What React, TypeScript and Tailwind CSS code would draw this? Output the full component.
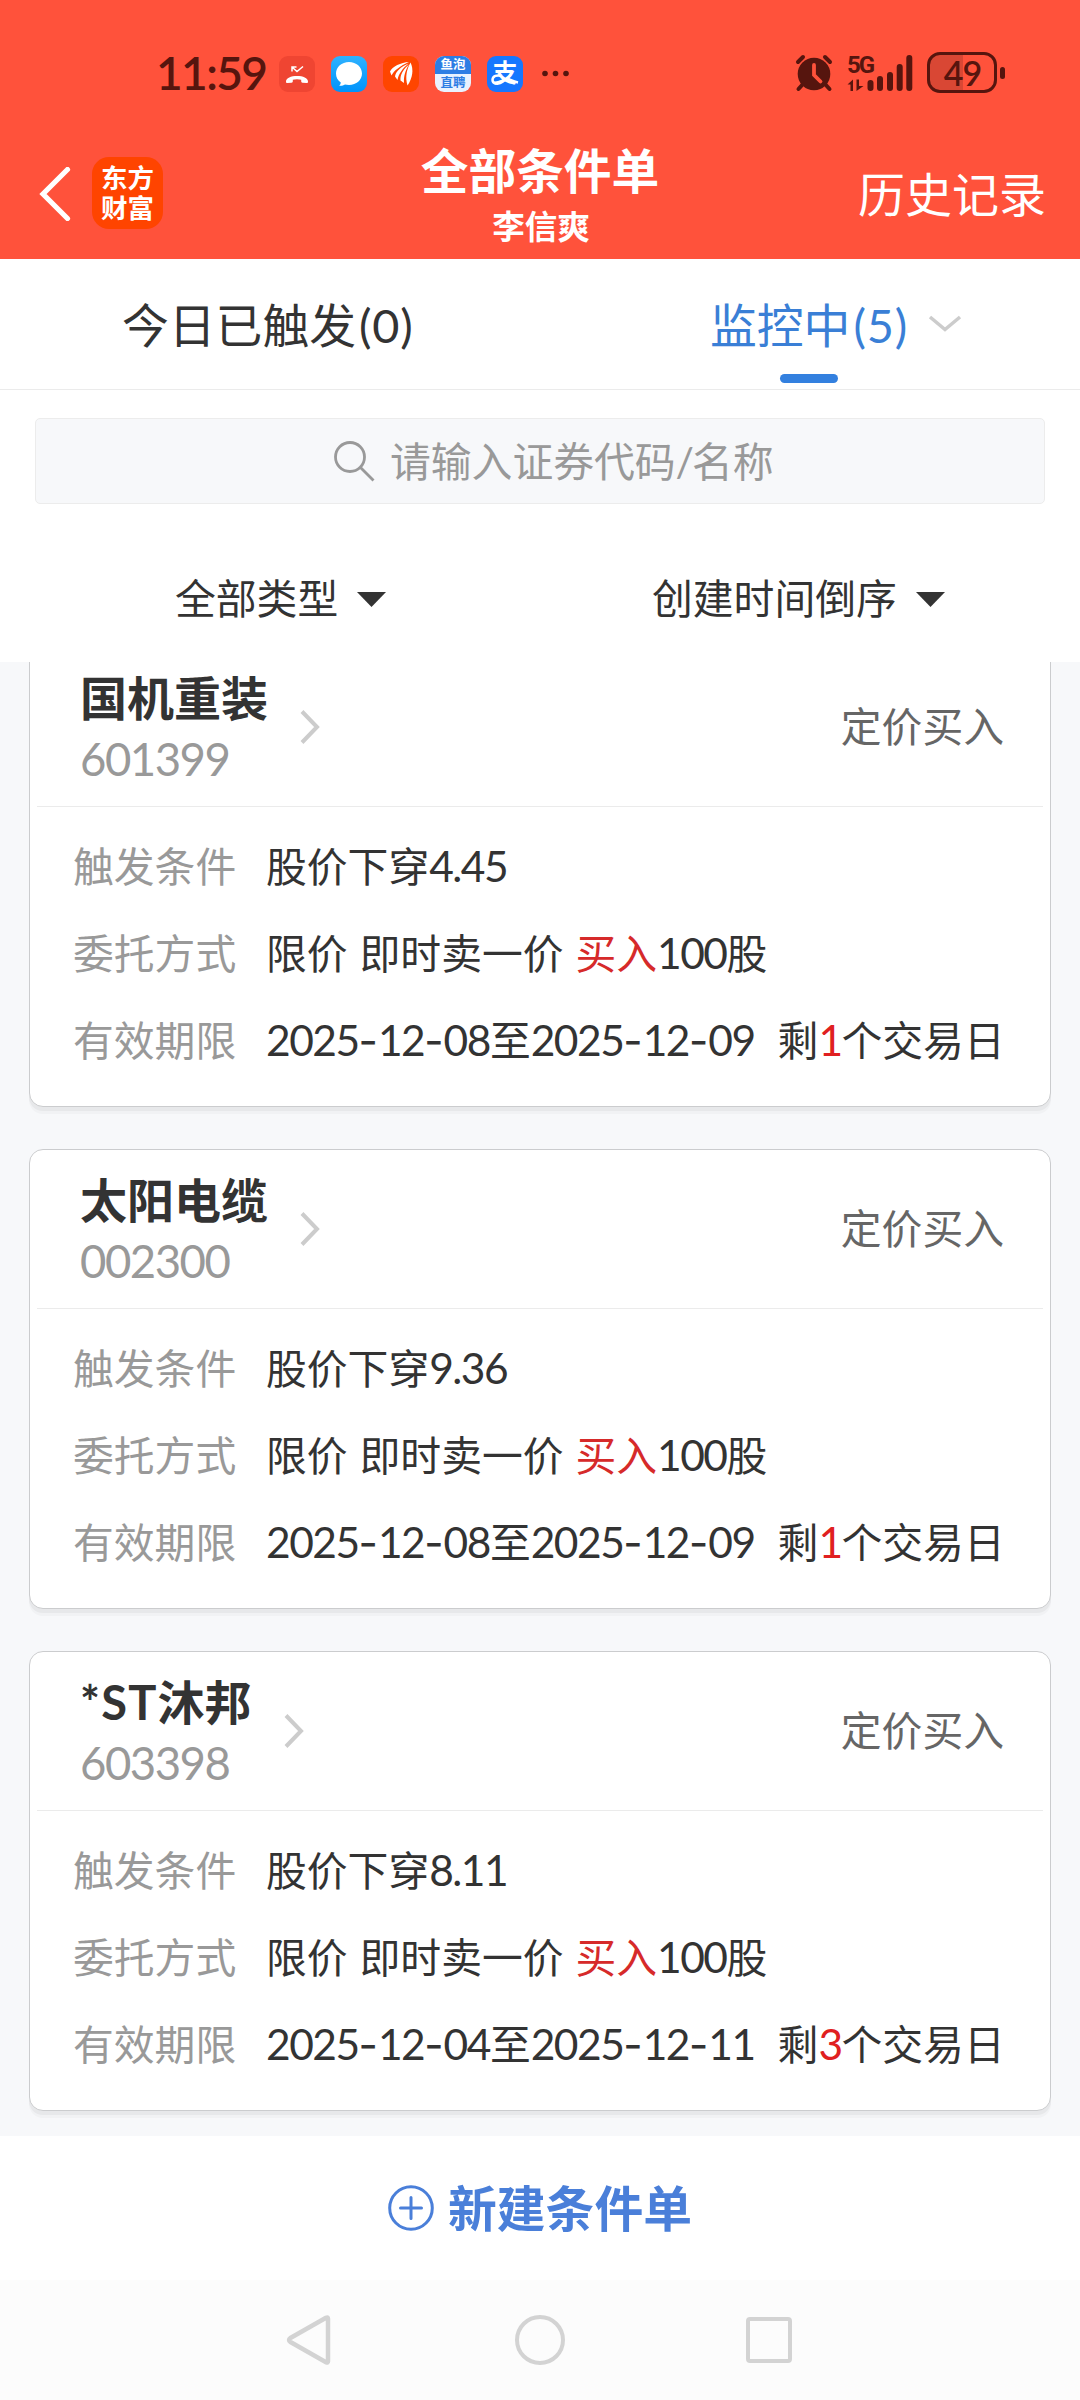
import type { ReactNode } from 'react';

type Order = {
  name: ReactNode;
  code: string;
  price: string;
  from: string;
  to: string;
  days: string;
};

const orders: Order[] = [
  { name: '国机重装', code: '601399', price: '4.45', from: '2025-12-08', to: '2025-12-09', days: '1' },
  { name: '太阳电缆', code: '002300', price: '9.36', from: '2025-12-08', to: '2025-12-09', days: '1' },
  {
    name: (
      <>
        <span className="tracking-[1.2px]">*ST</span>沐邦
      </>
    ),
    code: '603398',
    price: '8.11',
    from: '2025-12-04',
    to: '2025-12-11',
    days: '3',
  },
];

function Num({ children }: { children: ReactNode }) {
  return <span className="text-[42.5px] leading-none tracking-[-1.5px]">{children}</span>;
}

function DateText({ value }: { value: string }) {
  const parts = value.split('-');
  return (
    <Num>
      {parts.map((part, i) => (
        <span key={i}>
          {i > 0 && <span className="font-['Inter'] text-[42px] leading-none tracking-[0px]">-</span>}
          {part}
        </span>
      ))}
    </Num>
  );
}

function StatusBar() {
  return (
    <div className="flex h-[112px] items-start pl-[156px] text-[#56150e]">
      <div className="mt-[48px] w-[123px] whitespace-nowrap text-[46px] font-semibold leading-[50px] tracking-[-1.6px]">
        11:59
      </div>
      <div className="mt-[56px] flex gap-4">
        <svg width="36" height="36" viewBox="0 0 36 36">
          <rect width="36" height="36" rx="9" fill="#ef4532" />
          <path d="M13 15.500V11h4.500M13.500 11.500l4.500 4 6-5" fill="none" stroke="#fff" strokeWidth="1.500" />
          <path
            d="M7 25.500c0-3.500 5-5.500 11-5.500s11 2 11 5.500c0 1.300-.5 1.700-1.500 1.600l-4-.4c-1-.1-1.300-.6-1.300-1.500v-1.400c-2.500-.8-5.900-.8-8.400 0v1.400c0 .9-.3 1.400-1.300 1.500l-4 .4c-1 .1-1.500-.3-1.500-1.600z"
            fill="#fff"
          />
        </svg>
        <svg width="36" height="36" viewBox="0 0 36 36">
          <defs>
            <linearGradient id="chat" x1="0" y1="0" x2="0" y2="1">
              <stop offset="0" stopColor="#2fb2ff" />
              <stop offset="1" stopColor="#0093fb" />
            </linearGradient>
          </defs>
          <rect width="36" height="36" rx="9" fill="url(#chat)" />
          <path
            d="M18 6c7.300 0 13 5 13 11.500S25.300 29 18 29c-1.600 0-2.700-.2-4-.5-1.500 1-3.500 1.500-5.800 1.300 1-1 1.500-2.200 1.600-3.300C6.800 24.500 5 21.300 5 17.500 5 11 10.700 6 18 6z"
            fill="#fff"
          />
        </svg>
        <svg width="36" height="36" viewBox="0 0 36 36">
          <rect width="36" height="36" rx="9" fill="#ff4500" />
          <g fill="#fff">
            <path d="M26 6C18 6.500 9 10.500 7 15.500l1.500 4C11 14.500 17 10 26 6z" />
            <path d="M25.500 7.500C18.500 10.500 12.500 15.500 12 20.500l2.500 3.500C15.500 18 19.500 12.500 25.500 7.500z" />
            <path d="M26 8.500C20.500 13 17 18.500 17.500 24.500l3.500 2.500C20.500 20 22.500 14 26 8.500z" />
            <path d="M27.500 6.500C23.500 14 22 21 24.500 29.500 29.500 22 31 13.500 27.500 6.500z" />
          </g>
        </svg>
        <div className="flex h-9 w-9 flex-col overflow-hidden rounded-[9px] bg-[#e9f2ff] text-center text-[12.500px] font-bold leading-[17.500px]">
          <div className="h-[17.500px] bg-[#2d7de4] text-white">鱼泡</div>
          <div className="text-[#2d7de4]">直聘</div>
        </div>
        <div className="relative h-9 w-9 rounded-[9px] bg-[#1677ff] text-center text-[25px] font-bold leading-[33px] text-white">
          支
          <svg className="absolute left-0 top-0" width="36" height="36" viewBox="0 0 36 36">
            <path d="M15 20c-5-1.500-9.500 0-9.500 4s6 5 10.500 1.500M20 22.500c4 1.500 6 3 11 4" fill="none" stroke="#fff" strokeWidth="2.500" />
          </svg>
        </div>
      </div>
      <svg className="ml-[19px] mt-[70px]" width="27" height="7" viewBox="0 0 27 7" fill="currentColor">
        <circle cx="3" cy="3.500" r="2.800" />
        <circle cx="13.500" cy="3.500" r="2.800" />
        <circle cx="24" cy="3.500" r="2.800" />
      </svg>
      <svg className="ml-[225px] mt-[53px]" width="40" height="40" viewBox="0 0 40 40">
        <g stroke="currentColor" strokeWidth="4" strokeLinecap="round" fill="none">
          <path d="M4 9l5-5M36 9l-5-5M9 31l-4.500 5M31 31l4.500 5" />
        </g>
        <circle cx="20" cy="21" r="16.300" fill="currentColor" />
        <path d="M20 12v10l6.500 6.500" fill="none" stroke="#ff523b" strokeWidth="3.800" strokeLinecap="round" />
      </svg>
      <div className="ml-[13px] mt-[53px] flex h-[40px] w-[70px]">
        <div className="flex w-[20px] flex-col">
          <div className="whitespace-nowrap font-['Roboto'] text-[24px] font-bold leading-[24px] tracking-[-2px]">
            5G
          </div>
          <svg width="18" height="14" viewBox="0 0 18 14" fill="currentColor">
            <path d="M.5 7.500L6 2.500V14H3.500V7.500zM9.500 2.500V14l7-5H12V2.500z" />
          </svg>
        </div>
        <svg width="50" height="40" viewBox="20 0 50 40" fill="currentColor">
          <rect x="20.500" y="27" width="6" height="11" rx="3" />
          <rect x="30" y="23" width="6" height="15" rx="3" />
          <rect x="40" y="19" width="6" height="19" rx="3" />
          <rect x="49.700" y="11" width="6" height="27" rx="3" />
          <rect x="59.300" y="2" width="6" height="36" rx="3" />
        </svg>
      </div>
      <div className="ml-[10px] mt-[52px] flex items-center">
        <div className="flex h-[41px] w-[70px] items-center justify-center rounded-[13px] border-[3px] border-current bg-[linear-gradient(90deg,#d94734_52%,transparent_52%)] pl-px font-['Lato'] text-[34px] font-semibold leading-[35px] tracking-[-1px]">
          49
        </div>
        <div className="ml-[3px] h-[12px] w-[5px] rounded-full bg-current" />
      </div>
    </div>
  );
}

function Header() {
  return (
    <header className="grid h-[147px] grid-cols-[380px_1fr_380px] text-white">
      <div className="flex items-start pl-[39px]">
        <svg className="mt-[55px]" width="32" height="54" viewBox="0 0 32 54">
          <path d="M28.500 2.500L4 27l24.500 24.500" fill="none" stroke="#fff" strokeWidth="5.200" strokeLinecap="round" />
        </svg>
        <div className="ml-[21px] mt-[45px] h-[72px] w-[71px] rounded-[17px] bg-[#ff4400] pt-[7px] text-center text-[26.500px] font-bold leading-[29.500px]">
          东方
          <br />
          财富
        </div>
      </div>
      <div className="text-center">
        <h1 className="mt-[34px] text-[47.700px] font-bold leading-[50px]">全部条件单</h1>
        <div className="mt-[11px] pl-[2px] text-[32.600px] font-bold leading-[39px]">李信爽</div>
      </div>
      <div className="pr-[34px] pt-[57px] text-right text-[47px] leading-[50px]">历史记录</div>
    </header>
  );
}

function Caret() {
  return (
    <svg width="29" height="15" viewBox="0 0 29 15">
      <path d="M0 0h29L14.500 15z" fill="#333" />
    </svg>
  );
}

function OrderCard({ order }: { order: Order }) {
  return (
    <section className="h-[460px] shrink-0 rounded-[14px] border border-[#cbccce] bg-white px-[7px] shadow-[0_4px_0_#e7e8ea,0_7px_0_#f1f2f4]">
      <div className="flex h-[159px] items-start border-b border-[#ebebeb] pl-[43px] pr-[39px]">
        <div>
          <div className="mt-[24px] text-[47px] font-bold leading-[52px]">{order.name}</div>
          <div className="mt-[6px] text-[45.500px] leading-[58px] tracking-[-1.500px] text-[#999]">{order.code}</div>
        </div>
        <svg className="ml-[31px] mt-[61px]" width="22" height="36" viewBox="0 0 22 36">
          <path d="M3 2.500l15 15.500L3 33.500" fill="none" stroke="#ccc" strokeWidth="4" />
        </svg>
        <div className="ml-auto mt-[53px] text-[40.800px] leading-[52px] text-[#666]">定价买入</div>
      </div>
      <dl className="grid grid-cols-[193px_1fr] pl-[36px] pt-[16px] text-[40.800px] leading-[87px] text-[#333]">
        <dt className="text-[#999]">触发条件</dt>
        <dd>
          股价下穿<Num>{order.price}</Num>
        </dd>
        <dt className="text-[#999]">委托方式</dt>
        <dd className="whitespace-nowrap [word-spacing:1.5px]">
          限价 即时卖一价 <span className="text-[#d62a2a]">买入</span>
          <Num>100</Num>股
        </dd>
        <dt className="text-[#999]">有效期限</dt>
        <dd className="flex whitespace-nowrap">
          <span>
            <DateText value={order.from} />至<DateText value={order.to} />
          </span>
          <span className="ml-[23px]">
            剩
            <span className="text-[#e02020]">
              <Num>{order.days}</Num>
            </span>
            个交易日
          </span>
        </dd>
      </dl>
    </section>
  );
}

export default function App() {
  return (
    <div
      lang="zh-CN"
      className="flex h-[2400px] w-[1080px] flex-col overflow-hidden bg-white font-['Lato','Noto_Sans_CJK_SC',sans-serif] text-[#333]"
    >
      <div className="h-[259px] shrink-0 bg-[#ff523b]">
        <StatusBar />
        <Header />
      </div>

      <nav className="flex h-[131px] shrink-0 border-b border-[#ebebeb] text-[46.800px] leading-[52px]">
        <div className="w-1/2 pl-[122px] pt-[40px]">
          今日已触发<span className="ml-[3px] tracking-[0.8px]">(0)</span>
        </div>
        <div className="flex w-1/2 pl-[170px] text-[#3a7fd6]">
          <div className="flex flex-col items-center pt-[40px]">
            <div>
              监控中<span className="ml-[3px] tracking-[0.8px]">(5)</span>
            </div>
            <div className="mt-[23px] h-[9px] w-[58px] rounded-full bg-[#3380df]" />
          </div>
          <svg className="ml-[20px] mt-[56px]" width="34" height="18" viewBox="0 0 34 18">
            <path d="M2 2l15 12.500L32 2" fill="none" stroke="#ccc" strokeWidth="3.500" />
          </svg>
        </div>
      </nav>

      <div className="h-[272px] shrink-0 px-[35px] pt-[28px]">
        <div className="flex h-[86px] items-start rounded-[5px] border border-[#ececec] bg-[#f7f8fa] pl-[297px] text-[40.800px] text-[#999]">
          <svg className="mt-[21px]" width="43" height="43" viewBox="0 0 43 43" fill="none" stroke="#999" strokeWidth="2.800">
            <circle cx="17" cy="17" r="14.500" />
            <path d="M27.500 27.500L40.500 40.500" />
          </svg>
          <span className="ml-[14px] leading-[86px]">
            请输入证券代码<span className="tracking-[-2px]">/</span>名称
          </span>
        </div>
        <div className="flex pt-[69px] text-[40.800px] leading-[52px]">
          <div className="flex w-[477px] items-center gap-[19px] pl-[140px]">
            全部类型
            <Caret />
          </div>
          <div className="flex items-center gap-[19px] pl-[140px]">
            创建时间倒序
            <Caret />
          </div>
        </div>
      </div>

      <main className="flex h-[1474px] shrink-0 flex-col justify-end gap-[42px] overflow-hidden bg-[#f7f8fa] px-[29px] pb-[25px]">
        {orders.map((order) => (
          <OrderCard key={order.code} order={order} />
        ))}
      </main>

      <button className="flex h-[144px] shrink-0 items-center justify-center gap-[14px] bg-white text-[48.800px] font-bold leading-[52px] text-[#4a7fd9]">
        <svg width="46" height="46" viewBox="0 0 46 46" fill="none" stroke="currentColor" strokeWidth="3">
          <circle cx="23" cy="23" r="21.300" />
          <path d="M23 12.500v21M12.500 23h21" strokeLinecap="round" />
        </svg>
        新建条件单
      </button>

      <div className="flex h-[120px] shrink-0 items-center bg-[#fcfcfc] pl-[286px]">
        <svg width="46" height="52" viewBox="0 0 46 52">
          <path
            d="M40 3.800L4 24.300a2 2 0 0 0 0 3.400L40 48.200q2 1 2-1V4.800q0-2-2-1z"
            fill="none"
            stroke="#d3d3d3"
            strokeWidth="4.500"
          />
        </svg>
        <div className="ml-[183px] h-[50px] w-[50px] rounded-full border-[4.500px] border-[#d3d3d3]" />
        <div className="ml-[181px] h-[46px] w-[46px] rounded-[4px] border-[4px] border-[#d3d3d3]" />
      </div>
    </div>
  );
}
